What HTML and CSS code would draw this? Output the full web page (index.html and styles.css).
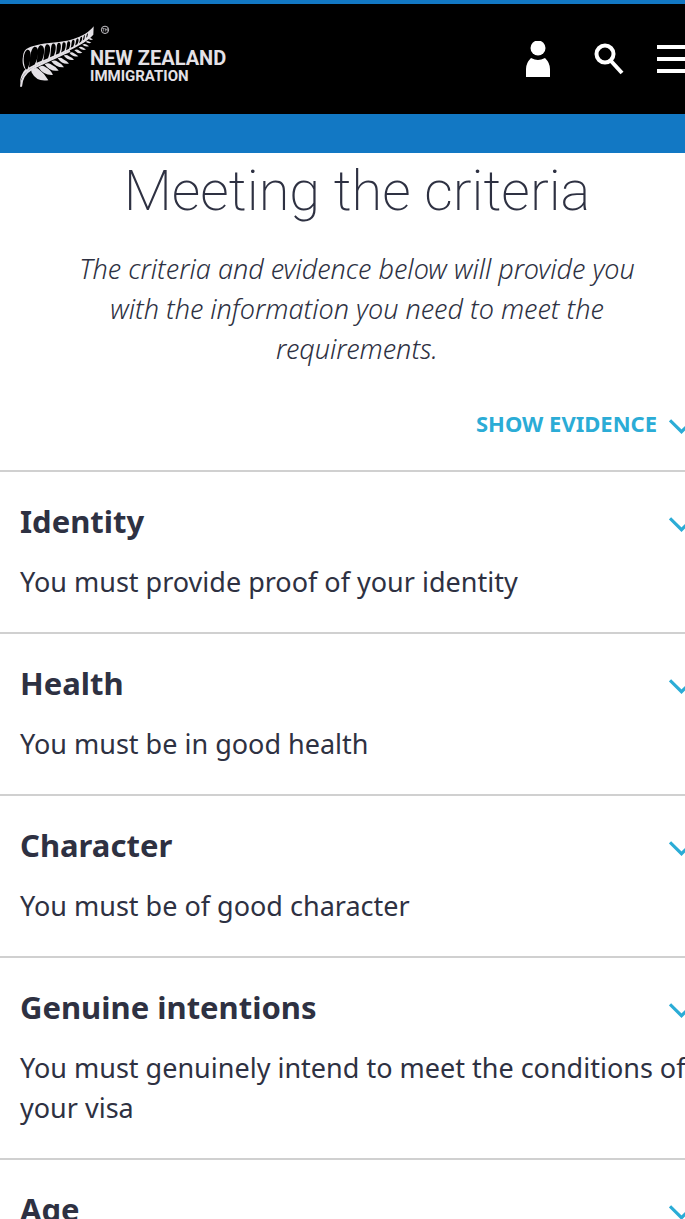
FILE: index.html
```html
<!DOCTYPE html>
<html lang="en">
<head>
<meta charset="utf-8">
<meta name="viewport" content="width=device-width, initial-scale=1">
<title>Meeting the criteria</title>
<link rel="stylesheet" href="styles.css">
</head>
<body>
<div class="page">
  <header class="header">
    <a class="logo" href="#" aria-label="New Zealand Immigration">
      <svg class="fern" viewBox="0 0 270 188" aria-hidden="true">
        <path fill="#e4e1e6" d="M1 187C-2 164 10 145 32 131C65 112 95 101 125 87C155 73 202 52 220 29L221 3C209 19 187 33 158 42C124 53 80 51 49 60C24 66 11 71 9 93C6 110 8 124 16 133C7 142 -3 162 1 187Z"/>
        <g fill="#000">
          <path d="M17 132C7 110 10 80 22 74C37 72 33 109 22 132Z"/>
          <path d="M27 127C30 102 30 73 43 65C61 63 55 100 44 118Z"/>
          <path d="M50 113C54 93 49 65 61 60C77 58 74 90 65 107Z"/>
          <path d="M70 105C75 86 71 61 81 57C95 57 91 83 84 99Z"/>
          <path d="M90 96C94 81 91 58 99 55C111 55 108 76 102 91Z"/>
          <path d="M107 89C112 75 108 55 116 53C126 53 123 73 118 84Z"/>
          <path d="M123 82C128 70 124 53 131 51C140 50 138 66 133 77Z"/>
          <path d="M138 75C142 64 139 49 146 48C153 48 151 62 147 71Z"/>
          <path d="M152 68C156 58 153 46 160 44C166 44 164 56 160 64Z"/>
          <path d="M165 61C169 53 167 42 172 40C178 40 176 51 172 57Z"/>
          <path d="M177 54C181 48 179 37 184 35C188 35 187 45 183 50Z"/>
          <path d="M188 46L192 31L195 30L193 42Z"/>
          <path d="M198 38L201 26L204 25L202 35Z"/>
        </g>
        <path fill="none" stroke="#e4e1e6" stroke-width="6" d="M3 185C4 158 18 141 36 131C72 111 120 92 150 77"/>
        <g fill="#e4e1e6">
          <path d="M33 134Q48 124 57 133Q75 146 85 165Q50 171 35 142Z"/>
          <path d="M55 126Q68 117 77 126Q91 132 99 149Q71 151 55 126Z"/>
          <path d="M74 117Q87 111 95 119Q107 124 116 136Q91 141 74 117Z"/>
          <path d="M94 108Q105 103 113 110Q124 115 132 126Q110 129 94 108Z"/>
          <path d="M113 99Q122 95 130 102Q141 107 147 115Q127 119 113 99Z"/>
          <path d="M131 91Q140 87 147 93Q157 97 162 104Q145 108 131 91Z"/>
          <path d="M148 83Q156 79 162 84Q170 88 175 93Q160 98 148 83Z"/>
          <path d="M163 75Q171 70 177 76L187 83Q174 87 163 75Z"/>
          <path d="M176 67Q183 62 189 67L198 73Q187 77 176 67Z"/>
          <path d="M187 59Q194 54 199 58L207 63Q196 67 187 59Z"/>
          <path d="M197 50Q203 46 207 49L214 53Q205 57 197 50Z"/>
          <path d="M205 41Q211 36 214 40L219 42Q212 47 205 41Z"/>
        </g>
        <circle cx="255" cy="14" r="11" fill="none" stroke="#c5c3c8" stroke-width="3"/>
        <path fill="none" stroke="#c5c3c8" stroke-width="2" d="M247 10h7M250 10v9M256 19v-9l3 5 3-5v9"/>
      </svg>
      <span class="wordmark"><span class="wordmark-top">NEW ZEALAND</span><span class="wordmark-bottom">IMMIGRATION</span></span>
    </a>
    <nav class="tools">
      <button class="tool" aria-label="Account">
        <svg width="24" height="36" viewBox="0 0 24 36" fill="#fff"><circle cx="12" cy="7" r="7.5"/><path d="M0 36V28Q0 22 5 17Q9 19 12 19T19 17Q24 22 24 28V36Z"/></svg>
      </button>
      <button class="tool tool-search" aria-label="Search">
        <svg width="30" height="32" viewBox="0 0 30 32" fill="none" stroke="#fff" stroke-width="4"><circle cx="11" cy="11" r="8.5"/><path d="M17 18L28 30"/></svg>
      </button>
      <button class="tool" aria-label="Menu">
        <svg width="37" height="28" viewBox="0 0 37 28" fill="#fff"><path d="M0 0h37v4H0zM0 12h37v4H0zM0 24h37v4H0z"/></svg>
      </button>
    </nav>
  </header>
  <main>
    <section class="intro">
      <h1 class="title">Meeting the criteria</h1>
      <p class="lead">The criteria and evidence below will provide you with the information you need to meet the requirements.</p>
    </section>
    <div class="toggle-row">
      <button class="toggle">SHOW EVIDENCE <svg class="chevron" viewBox="0 0 24 14"><path d="M1 1L12 12L23 1"/></svg></button>
    </div>
    <section class="item">
      <h2 class="item-title"><button class="item-button">Identity <svg class="chevron" viewBox="0 0 24 14"><path d="M1 1L12 12L23 1"/></svg></button></h2>
      <p class="item-text">You must provide proof of your identity</p>
    </section>
    <section class="item">
      <h2 class="item-title"><button class="item-button">Health <svg class="chevron" viewBox="0 0 24 14"><path d="M1 1L12 12L23 1"/></svg></button></h2>
      <p class="item-text">You must be in good health</p>
    </section>
    <section class="item">
      <h2 class="item-title"><button class="item-button">Character <svg class="chevron" viewBox="0 0 24 14"><path d="M1 1L12 12L23 1"/></svg></button></h2>
      <p class="item-text">You must be of good character</p>
    </section>
    <section class="item">
      <h2 class="item-title"><button class="item-button">Genuine intentions <svg class="chevron" viewBox="0 0 24 14"><path d="M1 1L12 12L23 1"/></svg></button></h2>
      <p class="item-text">You must genuinely intend to meet the conditions of your visa</p>
    </section>
    <section class="item">
      <h2 class="item-title"><button class="item-button">Age <svg class="chevron" viewBox="0 0 24 14"><path d="M1 1L12 12L23 1"/></svg></button></h2>
    </section>
  </main>
</div>
</body>
</html>
```
FILE: styles.css
```css
* { box-sizing: border-box; }
html { overflow: hidden; }
body {
  margin: 0;
  background: #fff;
  color: #2e3142;
  font-family: "Noto Sans", "Open Sans", sans-serif;
}
button {
  margin: 0;
  padding: 0;
  border: 0;
  background: none;
  color: inherit;
  font: inherit;
}
.page { margin-right: -29px; }
.header {
  display: flex;
  justify-content: space-between;
  align-items: center;
  height: 153px;
  padding: 0 20px;
  background: #000;
  border-top: 4px solid #1278c4;
  border-bottom: 39px solid #1278c4;
}
.logo {
  display: flex;
  align-items: center;
  color: #e4e1e6;
  text-decoration: none;
}
.fern {
  width: 90px;
  height: 63px;
  margin-right: -20px;
  margin-bottom: 6px;
}
.wordmark {
  display: flex;
  flex-direction: column;
  padding-top: 14px;
  font-family: Roboto, sans-serif;
  font-weight: 700;
}
.wordmark-top {
  font-size: 20px;
  line-height: 20px;
}
.wordmark-bottom {
  font-size: 15px;
  line-height: 16px;
}
.tools {
  display: flex;
  align-items: center;
  gap: 33px;
}
.tool-search { margin-left: 11px; }
.tool svg { display: block; }
.intro {
  padding: 0 64px;
  text-align: center;
}
.title {
  margin: 0;
  font-family: Roboto, sans-serif;
  font-size: 56px;
  font-weight: 200;
  line-height: 76px;
}
.lead {
  margin: 20px 0 0;
  font-size: 27px;
  font-style: italic;
  font-weight: 300;
  line-height: 40px;
}
.toggle-row {
  display: flex;
  justify-content: flex-end;
  padding: 34px 20px 27px;
}
.toggle {
  display: flex;
  align-items: center;
  gap: 12px;
  color: #2bacd6;
  font-size: 22px;
  font-weight: 700;
  line-height: 40px;
}
.chevron {
  flex: none;
  width: 25px;
  height: 15px;
  margin-top: 6px;
  fill: none;
  stroke: #2bacd6;
  stroke-width: 3;
}
.item {
  padding: 29px 20px 30px;
  border-top: 2px solid #d0d0d0;
}
.item-title {
  margin: 0;
  font-size: 31px;
  font-weight: 700;
  line-height: 40px;
}
.item-button {
  display: flex;
  justify-content: space-between;
  align-items: center;
  width: 100%;
  text-align: left;
}
.item-text {
  margin: 21px 0 0;
  font-size: 27px;
  line-height: 40px;
}
```
